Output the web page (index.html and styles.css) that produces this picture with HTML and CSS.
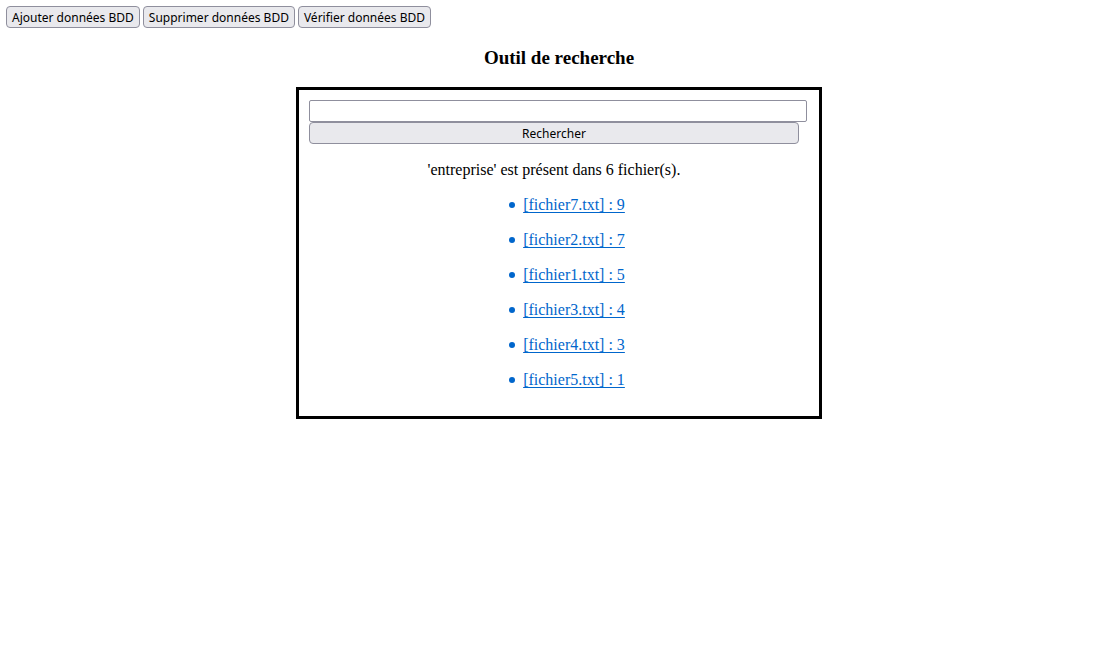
FILE: index.html
```html
<!DOCTYPE html>
<html lang="fr">
<head>
<meta charset="utf-8">
<title>Outil de recherche</title>
<link rel="stylesheet" href="styles.css">
</head>
<body>
<nav class="toolbar">
  <button class="button" type="button">Ajouter données BDD</button>
  <button class="button" type="button">Supprimer données BDD</button>
  <button class="button" type="button">Vérifier données BDD</button>
</nav>
<main class="content">
  <h1 class="title">Outil de recherche</h1>
  <section class="panel">
    <form class="search">
      <input class="field" type="text" aria-label="Mot recherché">
      <button class="button submit" type="button">Rechercher</button>
    </form>
    <p class="summary">'entreprise' est présent dans 6 fichier(s).</p>
    <ul class="results">
      <li class="result"><a class="link" href="#">[fichier7.txt] : 9</a></li>
      <li class="result"><a class="link" href="#">[fichier2.txt] : 7</a></li>
      <li class="result"><a class="link" href="#">[fichier1.txt] : 5</a></li>
      <li class="result"><a class="link" href="#">[fichier3.txt] : 4</a></li>
      <li class="result"><a class="link" href="#">[fichier4.txt] : 3</a></li>
      <li class="result"><a class="link" href="#">[fichier5.txt] : 1</a></li>
    </ul>
  </section>
</main>
</body>
</html>
```
FILE: styles.css
```css
* {
  box-sizing: border-box;
}

body {
  margin: 6px 2px 6px 6px;
  background: #fff;
  color: #000;
  font: 16px/18px "Liberation Serif", "Times New Roman", serif;
}

.toolbar {
  display: flex;
  gap: 3px;
}

.button {
  height: 22px;
  padding: 1px 5px 0;
  border: 1px solid #8f8f9d;
  border-radius: 4px;
  background: #e9e9ed;
  color: #000;
  font: 12px/19px "Noto Sans", sans-serif;
}

.content {
  width: calc(50% - 27px);
  min-width: 320px;
  margin: 0 auto;
}

.title {
  margin: 20px 0 19px;
  font-size: 19px;
  line-height: 20px;
  text-align: center;
}

.panel {
  padding: 10px 20px 10px 10px;
  border: 3px solid #000;
}

.search {
  display: flex;
  flex-direction: column;
}

.field {
  width: calc(100% + 8px);
  height: 22px;
  padding: 1px 4px;
  border: 1px solid #8f8f9d;
  border-radius: 2px;
  background: #fff;
  font: inherit;
}

.summary {
  margin: 17px 0;
  text-align: center;
}

.results {
  display: flex;
  flex-direction: column;
  align-items: center;
  gap: 17px;
  margin: 0;
  padding: 0 0 17px 26px;
  color: #06c;
  list-style: none;
}

.result {
  display: flex;
  align-items: center;
  gap: 8px;
}

.result::before {
  content: "";
  width: 6px;
  height: 6px;
  border-radius: 50%;
  background: currentColor;
}

.link {
  color: inherit;
  text-underline-offset: 2px;
}
```
